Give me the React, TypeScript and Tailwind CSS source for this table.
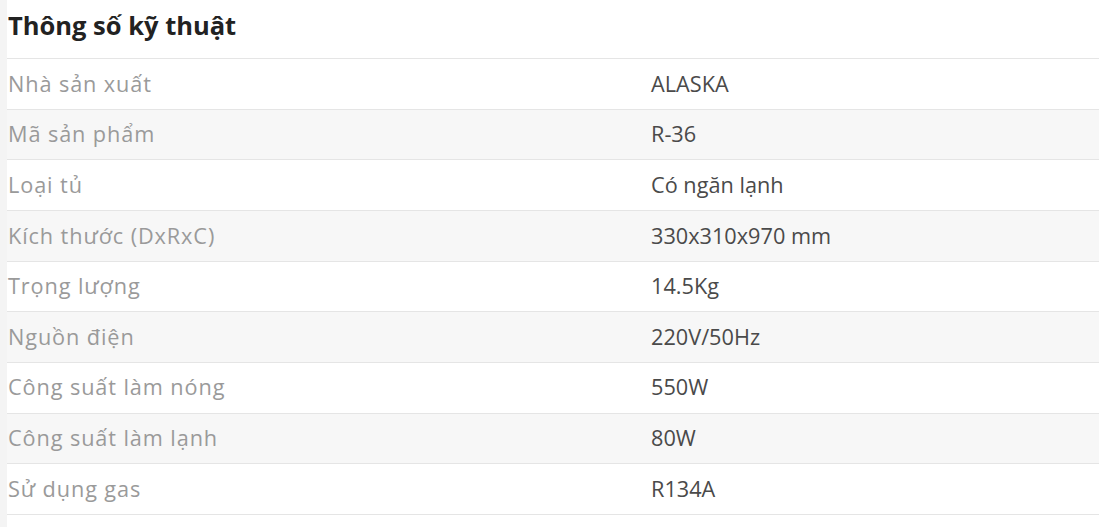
const specs: [string, string][] = [
  ["Nhà sản xuất", "ALASKA"],
  ["Mã sản phẩm", "R-36"],
  ["Loại tủ", "Có ngăn lạnh"],
  ["Kích thước (DxRxC)", "330x310x970 mm"],
  ["Trọng lượng", "14.5Kg"],
  ["Nguồn điện", "220V/50Hz"],
  ["Công suất làm nóng", "550W"],
  ["Công suất làm lạnh", "80W"],
  ["Sử dụng gas", "R134A"],
];

export default function App() {
  return (
    <div
      className="flex h-[527px] w-full bg-white"
      style={{ fontFamily: '"Open Sans", "Noto Sans", sans-serif' }}
    >
      <div className="w-[7px] shrink-0 bg-[#f4f4f4]" />
      <div className="flex-1">
        <h2 className="flex h-[58px] items-start pl-px pt-[6px] text-[25.5px] font-bold text-[#222]">
          Thông số kỹ thuật
        </h2>
        <div className="border-b border-[#e5e5e5]">
          {specs.map(([label, value], i) => (
            <div
              key={label}
              className={`flex h-[50.67px] items-center border-t border-[#e5e5e5] text-[21.7px] ${
                i % 2 === 1 ? "bg-[#f7f7f7]" : "bg-white"
              }`}
            >
              <div className="w-[644px] shrink-0 pl-px tracking-[0.9px] text-[#9a9a9a]">
                {label}
              </div>
              <div className="text-[#4a4a4a]">{value}</div>
            </div>
          ))}
        </div>
      </div>
    </div>
  );
}
